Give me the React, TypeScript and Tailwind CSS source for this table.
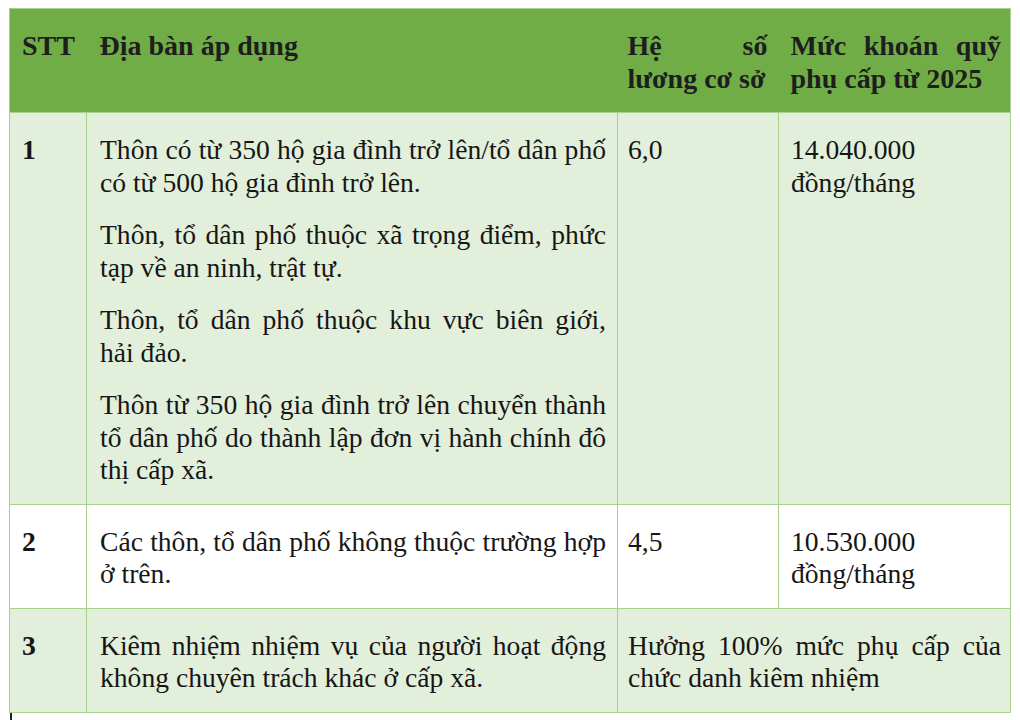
import React from 'react';

const rows = [
  {
    stt: '1',
    places: [
      'Thôn có từ 350 hộ gia đình trở lên/tổ dân phố có từ 500 hộ gia đình trở lên.',
      'Thôn, tổ dân phố thuộc xã trọng điểm, phức tạp về an ninh, trật tự.',
      'Thôn, tổ dân phố thuộc khu vực biên giới, hải\u00a0đảo.',
      'Thôn từ 350 hộ gia đình trở lên chuyển thành tổ dân phố do thành lập đơn vị hành chính đô thị cấp xã.',
    ],
    coef: '6,0',
    amount: '14.040.000 đồng/tháng',
    shaded: true,
  },
  {
    stt: '2',
    places: ['Các thôn, tổ dân phố không thuộc trường hợp ở trên.'],
    coef: '4,5',
    amount: '10.530.000 đồng/tháng',
    shaded: false,
  },
];

const cell = 'align-top border border-[#a9d08e] pt-[21px] pb-[17px]';
const head = 'align-top pt-[21px] pb-[17px] font-bold text-[28px]';

export default function App() {
  return (
    <div className="w-[1020px] h-[720px] bg-white pt-[8px] pl-[9px] font-['Liberation_Serif','Times_New_Roman',serif] text-[#161616]">
      <table className="table-fixed border-collapse w-[1001px] border border-[#a9d08e] font-['Liberation_Serif','Times_New_Roman',serif] text-[27.6px] leading-[32.5px] text-[#161616]">
        <colgroup>
          <col className="w-[77px]" />
          <col className="w-[531px]" />
          <col className="w-[161px]" />
          <col className="w-[232px]" />
        </colgroup>
        <thead>
          <tr className="bg-[#70ad47] text-[#1e1e1e]">
            <th className={head + ' text-left px-[12px]'}>STT</th>
            <th className={head + ' text-left pl-[13px] pr-[11px]'}>Địa bàn áp dụng</th>
            <th className={head + ' text-justify pl-[10px] pr-[11px]'}>Hệ số lương cơ sở</th>
            <th className={head + ' text-justify pl-[12px] pr-[9px]'}>Mức khoán quỹ phụ cấp từ 2025</th>
          </tr>
        </thead>
        <tbody>
          {rows.map((r) => (
            <tr key={r.stt} className={r.shaded ? 'bg-[#e2efda]' : 'bg-white'}>
              <td className={cell + ' px-[12px] font-bold'}>{r.stt}</td>
              <td className={cell + ' text-justify pl-[13px] pr-[11px]'}>
                <div className="flex flex-col gap-[20px]">
                  {r.places.map((p) => (
                    <p key={p}>{p}</p>
                  ))}
                </div>
              </td>
              <td className={cell + ' pl-[10px] pr-[11px]'}>{r.coef}</td>
              <td className={cell + ' pl-[12px] pr-[9px]'}>{r.amount}</td>
            </tr>
          ))}
          <tr className="bg-[#e2efda]">
            <td className={cell + ' px-[12px] font-bold'}>3</td>
            <td className={cell + ' text-justify pl-[13px] pr-[11px]'}>
              Kiêm nhiệm nhiệm vụ của người hoạt động không chuyên trách khác ở cấp xã.
            </td>
            <td colSpan={2} className={cell + ' text-justify pl-[10px] pr-[9px]'}>
              Hưởng 100% mức phụ cấp của chức danh kiêm nhiệm
            </td>
          </tr>
        </tbody>
      </table>
      <div className="ml-[1px] h-[10px] border-l-2 border-[#222]" />
    </div>
  );
}
